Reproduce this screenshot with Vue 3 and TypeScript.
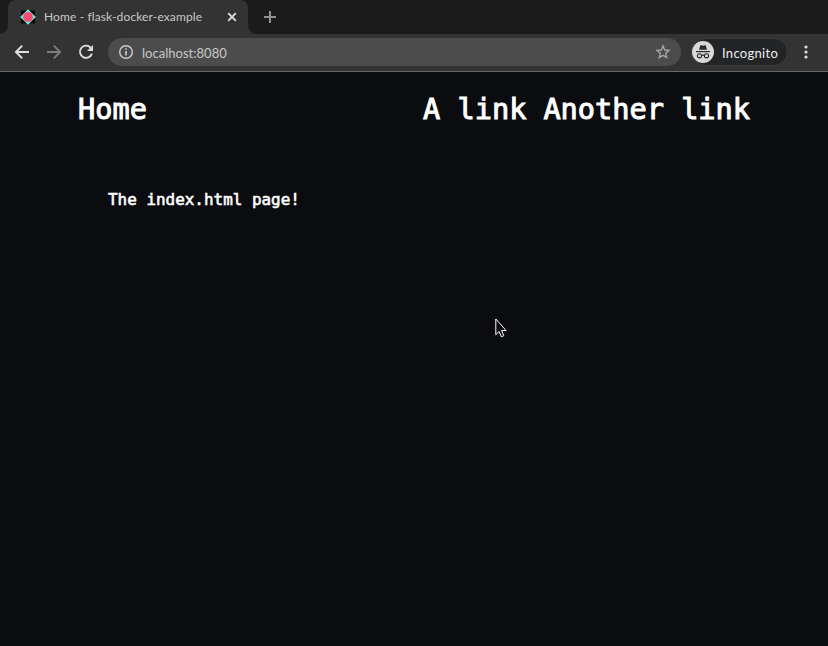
<script setup lang="ts">
import { ref } from 'vue'

const tabTitle = ref('Home - flask-docker-example')
const address = ref('localhost:8080')
const links: string[] = ['A link', 'Another link']
</script>

<template>
  <div class="browser">
    <header class="tabs">
      <div class="tab">
        <svg class="favicon" width="16" height="16" viewBox="0 0 16 16">
          <rect x="1" y="1.5" width="14" height="13" fill="#080808" />
          <path d="M8 .2 15.8 8 8 15.8 .2 8Z" fill="#68efdf" />
          <circle cx="8" cy="8" r="4.9" fill="#ff4a72" />
        </svg>
        <span class="tab-title">{{ tabTitle }}</span>
        <svg class="close" width="16" height="16" viewBox="0 0 16 16">
          <path d="m4.2 4.2 7.6 7.6m0-7.6-7.6 7.6" stroke="#dcdcdc" stroke-width="1.9" />
        </svg>
      </div>
      <svg class="new-tab" width="14" height="14" viewBox="0 0 14 14">
        <path d="M7 1v12M1 7h12" stroke="#929292" stroke-width="2" />
      </svg>
    </header>

    <div class="toolbar">
      <div class="nav-buttons">
        <svg width="16" height="16" viewBox="0 0 16 16" fill="none" stroke="#dedede" stroke-width="1.9">
          <path d="M15 8H2.2M8.2 1.7 1.9 8 8.2 14.3" />
        </svg>
        <svg width="16" height="16" viewBox="0 0 16 16" fill="none" stroke="#7c7c7c" stroke-width="1.9">
          <path d="M1 8h12.8M7.8 1.7 14.1 8 7.8 14.3" />
        </svg>
        <svg width="16" height="16" viewBox="0 0 16 16">
          <path d="M12.6 3.6A6.1 6.1 0 1 0 13.9 9.6" fill="none" stroke="#dedede" stroke-width="1.9" />
          <path d="M15 1v6H9Z" fill="#dedede" />
        </svg>
      </div>
      <div class="address">
        <svg width="16" height="16" viewBox="0 0 16 16">
          <circle cx="8" cy="8" r="6.3" fill="none" stroke="#cecece" stroke-width="1.4" />
          <path d="M8 4.2v1.6M8 7v4.6" stroke="#cecece" stroke-width="1.6" />
        </svg>
        <span class="url">{{ address }}</span>
        <svg class="star" width="16" height="16" viewBox="0 0 16 16">
          <path d="m8 1.9 1.7 4.1 4.4.4-3.4 2.9 1 4.3L8 11.3l-3.7 2.3 1-4.3-3.4-2.9 4.4-.4Z" fill="none" stroke="#a5a5a5" stroke-width="1.4" />
        </svg>
      </div>
      <div class="incognito">
        <svg width="22" height="22" viewBox="0 0 22 22">
          <circle cx="11" cy="11" r="11" fill="#d8d8d8" />
          <path d="M7 8.8 8.2 4.7Q8.5 3.9 9.3 4.2l1.7.5 1.7-.5q.8-.3 1.1.5L15 8.8Z" fill="#292a2c" />
          <path d="M4 10.6h14" stroke="#292a2c" stroke-width="1.2" />
          <g fill="none" stroke="#292a2c" stroke-width="1.1">
            <circle cx="7.5" cy="14.8" r="2.1" />
            <circle cx="14.5" cy="14.8" r="2.1" />
            <path d="M9.6 14.6q1.4-.9 2.8 0" />
          </g>
        </svg>
        <span class="incognito-label">Incognito</span>
      </div>
      <svg class="menu" width="4" height="14" viewBox="0 0 4 14" fill="#dedede">
        <circle cx="2" cy="2" r="1.6" />
        <circle cx="2" cy="7" r="1.6" />
        <circle cx="2" cy="12" r="1.6" />
      </svg>
    </div>

    <main class="page">
      <nav class="site-nav">
        <a>Home</a>
        <div class="links">
          <a v-for="link in links" :key="link">{{ link }}</a>
        </div>
      </nav>
      <p class="message">The index.html page!</p>
      <svg class="cursor" width="13" height="21" viewBox="0 0 13 21">
        <path d="M.8 1v15.7l3.3-3.2 2.4 5.3 2.3-1.1-2.3-5.2h4.6Z" fill="#0b0c0f" stroke="#fff" stroke-width="1" />
      </svg>
    </main>
  </div>
</template>

<style>
body {
  margin: 0;
  background: #0b0c0f;
}
</style>

<style scoped>
.browser {
  display: flex;
  flex-direction: column;
  width: 828px;
  height: 646px;
  overflow: hidden;
  font-family: Lato, "Open Sans", sans-serif;
}
svg {
  display: block;
  flex: none;
}
.tabs {
  display: flex;
  height: 34px;
  background: #1b1b1b;
}
.tab {
  position: relative;
  display: flex;
  align-items: center;
  box-sizing: border-box;
  width: 240px;
  margin-left: 8px;
  padding: 0 8px 0 12px;
  border-radius: 8px 8px 0 0;
  background: #333;
}
.tab::before,
.tab::after {
  content: "";
  position: absolute;
  bottom: 0;
  width: 8px;
  height: 8px;
}
.tab::before {
  left: -8px;
  background: radial-gradient(circle at 0 0, transparent 7.5px, #333 8px);
}
.tab::after {
  right: -8px;
  background: radial-gradient(circle at 100% 0, transparent 7.5px, #333 8px);
}
.tab-title {
  margin-left: 8px;
  color: #c9c9c9;
  font-size: 12px;
  letter-spacing: 0.12px;
  line-height: 16px;
  white-space: nowrap;
}
.close {
  margin-left: auto;
}
.new-tab {
  margin: 10px 0 0 15px;
}
.toolbar {
  display: flex;
  align-items: center;
  box-sizing: border-box;
  height: 38px;
  padding: 0 20px 1px 14px;
  border-bottom: 1px solid #666;
  background: #333;
}
.nav-buttons {
  display: flex;
  gap: 16px;
}
.address {
  display: flex;
  align-items: center;
  box-sizing: border-box;
  width: 573px;
  height: 28px;
  margin-left: 14px;
  padding: 0 10px;
  border-radius: 14px;
  background: #4c4c4c;
}
.url {
  margin-left: 8px;
  padding-top: 1px;
  color: #c8c8c8;
  font-size: 13px;
  letter-spacing: 0.02px;
}
.star {
  margin-left: auto;
}
.incognito {
  display: flex;
  align-items: center;
  box-sizing: border-box;
  width: 97px;
  height: 28px;
  margin-left: 10px;
  border: 1px solid #3b3c3d;
  border-radius: 14px;
  background: #222426;
}
.incognito-label {
  margin-left: 8px;
  padding-top: 1px;
  color: #eee;
  font-size: 13px;
  letter-spacing: 0.3px;
}
.menu {
  margin-left: auto;
}
.page {
  flex: 1;
  background: #0b0c0f;
  color: #fff;
  font-family: "DejaVu Sans Mono", monospace;
}
.site-nav {
  display: flex;
  justify-content: space-between;
  padding: 18px 78px 0;
  font-size: 28.6px;
  line-height: 38px;
  -webkit-text-stroke: 1px #fff;
}
.links {
  display: flex;
  gap: 17px;
}
.message {
  margin: 61px 0 0 108px;
  font-size: 15.95px;
  line-height: 21px;
  -webkit-text-stroke: 0.6px #fff;
}
.cursor {
  position: absolute;
  left: 495px;
  top: 318px;
}
</style>
